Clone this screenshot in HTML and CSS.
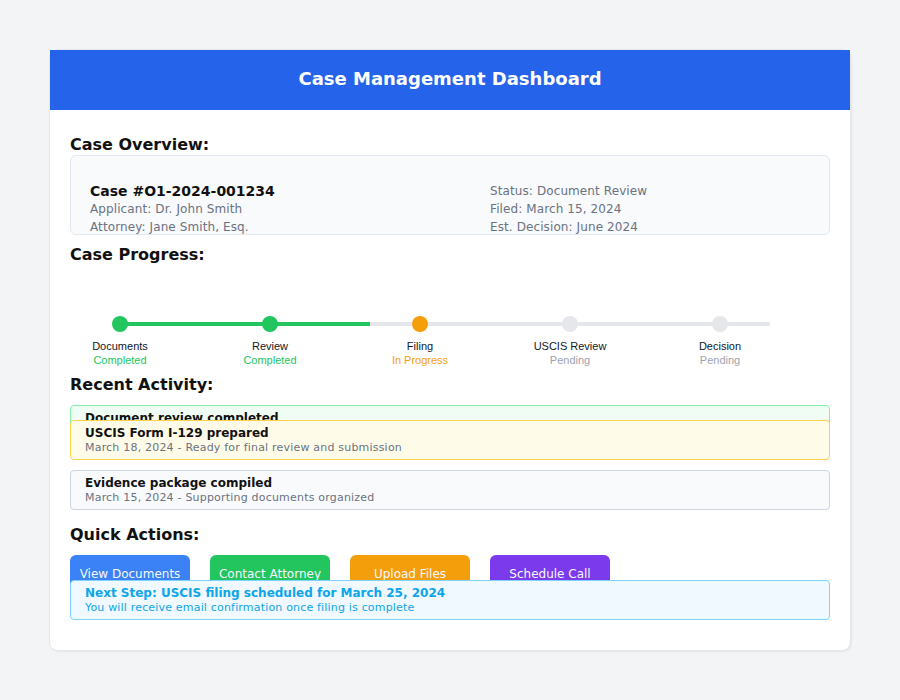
FILE: index.html
```html
<!DOCTYPE html>
<html>
<head>
<meta charset="utf-8">
<title>Case Management Dashboard</title>
<link rel="stylesheet" href="styles.css">
</head>
<body>
<div class="card">
  <header class="card-header">Case Management Dashboard</header>
  <main class="content">
    <h2 class="section-title first">Case Overview:</h2>
    <section class="overview">
      <div class="ov-col">
        <div class="case-id">Case #O1-2024-001234</div>
        <div class="ov-line">Applicant: Dr. John Smith</div>
        <div class="ov-line">Attorney: Jane Smith, Esq.</div>
      </div>
      <div class="ov-col">
        <div class="ov-line ov-top">Status: Document Review</div>
        <div class="ov-line">Filed: March 15, 2024</div>
        <div class="ov-line">Est. Decision: June 2024</div>
      </div>
    </section>

    <h2 class="section-title progress-title">Case Progress:</h2>
    <section class="progress">
      <div class="track"></div>
      <div class="steps">
        <div class="step done"><span class="dot"></span><span class="step-name">Documents</span><span class="step-status">Completed</span></div>
        <div class="step done"><span class="dot"></span><span class="step-name">Review</span><span class="step-status">Completed</span></div>
        <div class="step active"><span class="dot"></span><span class="step-name">Filing</span><span class="step-status">In Progress</span></div>
        <div class="step pending"><span class="dot"></span><span class="step-name">USCIS Review</span><span class="step-status">Pending</span></div>
        <div class="step pending"><span class="dot"></span><span class="step-name">Decision</span><span class="step-status">Pending</span></div>
      </div>
    </section>

    <h2 class="section-title activity-title">Recent Activity:</h2>
    <section class="activity">
      <div class="act act-green">
        <div class="act-title">Document review completed</div>
        <div class="act-sub">March 20, 2024 - All documents verified</div>
      </div>
      <div class="act act-yellow">
        <div class="act-title">USCIS Form I-129 prepared</div>
        <div class="act-sub">March 18, 2024 - Ready for final review and submission</div>
      </div>
      <div class="act act-gray">
        <div class="act-title">Evidence package compiled</div>
        <div class="act-sub">March 15, 2024 - Supporting documents organized</div>
      </div>
    </section>

    <h2 class="section-title actions-title">Quick Actions:</h2>
    <section class="actions">
      <button class="btn btn-blue">View Documents</button>
      <button class="btn btn-green">Contact Attorney</button>
      <button class="btn btn-orange">Upload Files</button>
      <button class="btn btn-purple">Schedule Call</button>
    </section>
    <section class="next-step">
      <div class="next-title">Next Step: USCIS filing scheduled for March 25, 2024</div>
      <div class="next-sub">You will receive email confirmation once filing is complete</div>
    </section>
  </main>
</div>
</body>
</html>
```

FILE: styles.css
```css
* { box-sizing: border-box; }

html, body {
  margin: 0;
  padding: 0;
}

body {
  background: #f3f4f6;
  font-family: "DejaVu Sans", sans-serif;
  padding: 50px;
}

.card {
  width: 800px;
  height: 600px;
  background: #ffffff;
  border-radius: 8px;
  box-shadow: 0 0 0 1px #e5e7eb, 1px 1px 3px rgba(0, 0, 0, 0.12);
}

.card-header {
  height: 60px;
  padding-bottom: 4px;
  background: #2563eb;
  color: #ffffff;
  font-weight: bold;
  font-size: 18px;
  display: flex;
  align-items: center;
  justify-content: center;
}

.content {
  padding: 25px 20px 0 20px;
}

.section-title {
  margin: 0;
  font-size: 16px;
  line-height: 20px;
  font-weight: bold;
  color: #111111;
}

.progress-title { margin-top: 10px; }
.activity-title { margin-top: 8px; }
.actions-title { margin-top: 15px; }

/* Overview */
.overview {
  height: 80px;
  background: #f8fafc;
  border: 1px solid #e2e8f0;
  border-radius: 6px;
  padding: 26px 19px 0 19px;
  display: grid;
  grid-template-columns: 400px 1fr;
}

.case-id {
  font-size: 14px;
  line-height: 18px;
  font-weight: bold;
  color: #111111;
}

.ov-line {
  font-size: 12px;
  line-height: 18px;
  color: #6b7280;
  letter-spacing: 0.1px;
}

/* Progress */
.progress {
  padding-top: 57px;
}

.track {
  margin-left: 50px;
  width: 650px;
  height: 4px;
  background: linear-gradient(to right, #22c55e 0, #22c55e 250px, #e5e7eb 250px, #e5e7eb 100%);
}

.steps {
  margin-top: -10px;
  display: flex;
  gap: 50px;
}

.step {
  width: 100px;
  display: flex;
  flex-direction: column;
  align-items: center;
  font-family: "Liberation Sans", Arial, sans-serif;
  font-size: 11px;
  line-height: 14px;
}

.dot {
  width: 16px;
  height: 16px;
  border-radius: 50%;
  margin-bottom: 7px;
}

.step-name { color: #111827; }

.done .dot { background: #22c55e; }
.done .step-status { color: #22c55e; }
.active .dot { background: #f59e0b; }
.active .step-status { color: #f59e0b; }
.pending .dot { background: #e5e7eb; }
.pending .step-status { color: #9ca3af; }

/* Activity */
.activity {
  margin-top: 10px;
}

.act {
  position: relative;
  height: 40px;
  border: 1px solid;
  border-radius: 4px;
  padding: 5px 14px 0 14px;
}

.act-title {
  font-size: 12px;
  line-height: 15px;
  font-weight: bold;
  color: #111111;
}

.act-sub {
  font-size: 11px;
  line-height: 14px;
  color: #6b7280;
  letter-spacing: 0.2px;
}

.act-green { background: #f0fdf4; border-color: #86efac; }
.act-yellow { background: #fefce8; border-color: #fcd34d; margin-top: -25px; }
.act-gray { background: #f8fafc; border-color: #cbd5e1; margin-top: 10px; }

/* Actions */
.actions {
  margin-top: 10px;
  display: flex;
  gap: 20px;
}

.btn {
  width: 120px;
  height: 40px;
  border: none;
  border-radius: 6px;
  color: #f5f8ff;
  font-family: "DejaVu Sans", sans-serif;
  font-size: 12px;
  line-height: 18px;
  padding: 0 0 2px 0;
  text-align: center;
  display: block;
}

.btn-blue { background: #3b82f6; }
.btn-green { background: #22c55e; }
.btn-orange { background: #f59e0b; }
.btn-purple { background: #7c3aed; }

.next-step {
  position: relative;
  margin-top: -15px;
  height: 40px;
  background: #f0f9ff;
  border: 1px solid #7dd3fc;
  border-radius: 4px;
  padding: 4px 14px 0 14px;
  color: #0ea5e9;
}

.next-title {
  font-size: 12px;
  line-height: 16px;
  font-weight: bold;
}

.next-sub {
  font-size: 11px;
  line-height: 14px;
  letter-spacing: 0.18px;
}
```
